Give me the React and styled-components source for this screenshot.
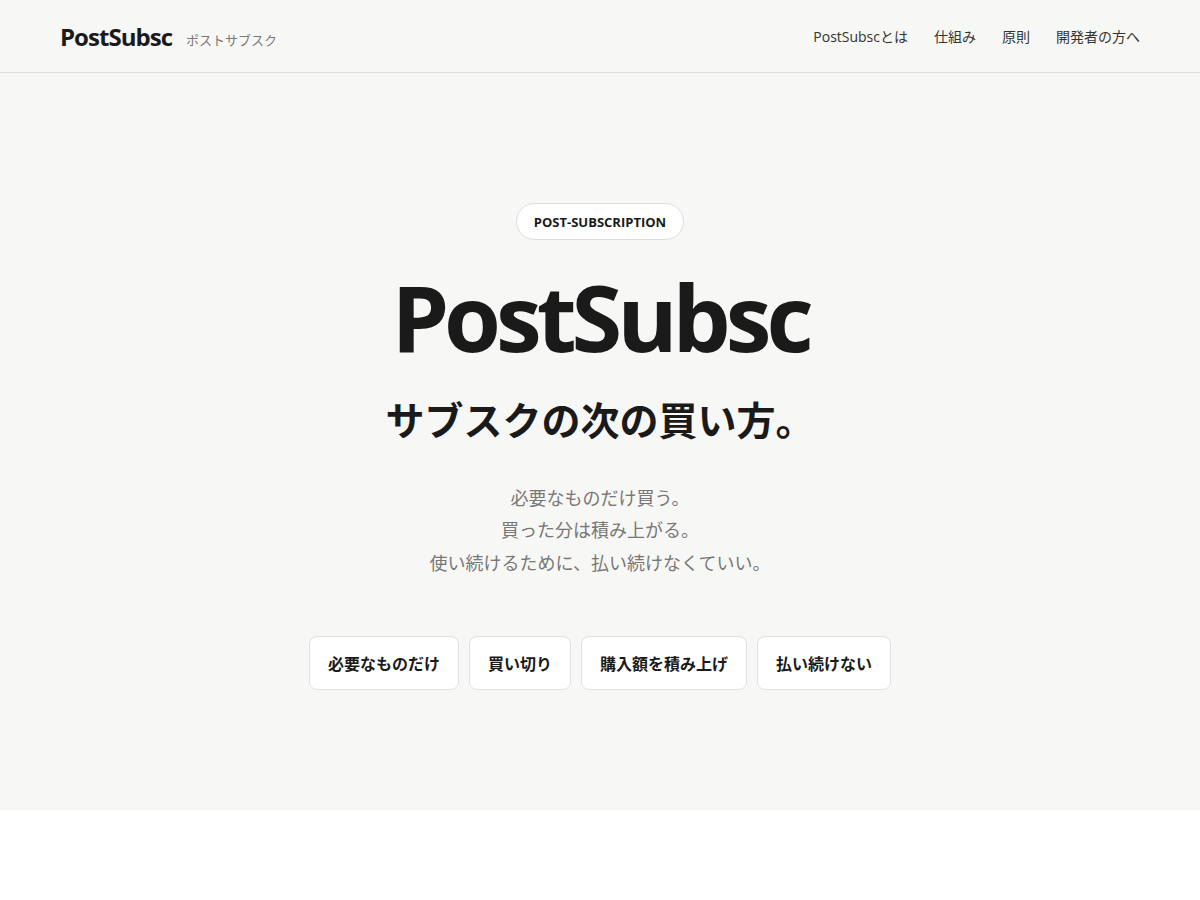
import React from "react";
import styled, { createGlobalStyle } from "styled-components";

const GlobalStyle = createGlobalStyle`
  html, body {
    margin: 0;
    padding: 0;
    background: #ffffff;
  }
  * {
    box-sizing: border-box;
  }
`;

const navItems = ["PostSubscとは", "仕組み", "原則", "開発者の方へ"];
const tags = ["必要なものだけ", "買い切り", "購入額を積み上げ", "払い続けない"];

function App() {
  return (
    <>
      <GlobalStyle />
      <Header>
        <Brand>
          <Logo>PostSubsc</Logo>
          <LogoSub>ポストサブスク</LogoSub>
        </Brand>
        <Nav>
          {navItems.map((item) => (
            <NavLink key={item} href="#">
              {item}
            </NavLink>
          ))}
        </Nav>
      </Header>
      <Hero>
        <Badge>POST-SUBSCRIPTION</Badge>
        <Title>PostSubsc</Title>
        <Tagline>サブスクの次の買い方。</Tagline>
        <Lead>
          必要なものだけ買う。
          <br />
          買った分は積み上がる。
          <br />
          使い続けるために、払い続けなくていい。
        </Lead>
        <Tags>
          {tags.map((t) => (
            <Tag key={t}>{t}</Tag>
          ))}
        </Tags>
      </Hero>
    </>
  );
}

const Header = styled.header`
  height: 73px;
  padding: 0 60px;
  display: flex;
  align-items: center;
  justify-content: space-between;
  background: #f7f7f5;
  border-bottom: 1px solid #dedede;
`;
const Brand = styled.div`
  display: flex;
  align-items: baseline;
  gap: 14px;
`;
const Logo = styled.div`
  font-family: "Open Sans", sans-serif;
  font-weight: 700;
  font-size: 24px;
  letter-spacing: -0.04em;
  color: #1a1a1a;
`;
const LogoSub = styled.span`
  font-family: "Liberation Serif", "Noto Sans CJK JP", serif;
  font-size: 13px;
  color: #777;
  position: relative;
  top: -1px;
`;
const Nav = styled.nav`
  display: flex;
  gap: 26px;
  padding-bottom: 1px;
`;
const NavLink = styled.a`
  font-family: "Open Sans", "Noto Sans CJK JP", sans-serif;
  font-size: 14px;
  color: #333;
  text-decoration: none;
`;
const Hero = styled.section`
  height: 737px;
  padding-top: 130px;
  background: #f7f7f5;
  display: flex;
  flex-direction: column;
  align-items: center;
  text-align: center;
`;
const Badge = styled.div`
  height: 37px;
  padding: 0 17px;
  display: flex;
  align-items: center;
  border: 1px solid #dedede;
  border-radius: 999px;
  background: #ffffff;
  font-family: "Open Sans", sans-serif;
  font-weight: 700;
  font-size: 13px;
  color: #1a1a1a;
`;
const Title = styled.h1`
  margin: 26px 0 0;
  font-family: "Open Sans", sans-serif;
  font-weight: 700;
  font-size: 92px;
  line-height: 1.1;
  letter-spacing: -0.055em;
  color: #1a1a1a;
`;
const Tagline = styled.h2`
  margin: 30px 0 0;
  font-family: "Liberation Serif", "Noto Sans CJK JP", serif;
  font-weight: 700;
  font-size: 39px;
  line-height: 1.3;
  color: #1a1a1a;
`;
const Lead = styled.p`
  margin: 35px 0 0;
  font-family: "Liberation Serif", "Noto Sans CJK JP", serif;
  font-size: 18px;
  line-height: 1.8;
  color: #777;
`;
const Tags = styled.div`
  margin-top: 56px;
  display: flex;
  gap: 10px;
`;
const Tag = styled.div`
  height: 54px;
  padding: 0 18px;
  display: flex;
  align-items: center;
  background: #ffffff;
  border: 1px solid #e0e0e0;
  border-radius: 8px;
  font-family: "Liberation Serif", "Noto Sans CJK JP", serif;
  font-weight: 700;
  font-size: 16px;
  color: #1a1a1a;
`;

export default App;
